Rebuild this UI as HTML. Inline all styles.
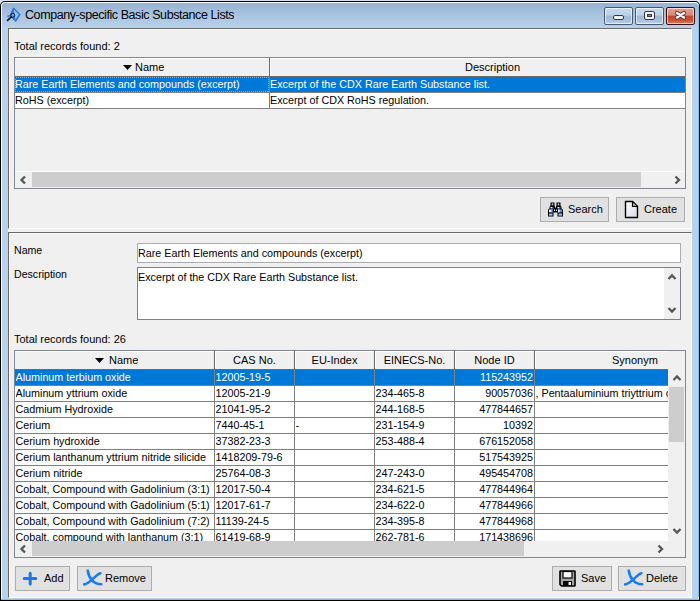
<!DOCTYPE html><html><head><meta charset="utf-8"><style>
*{margin:0;padding:0;box-sizing:border-box}
html,body{width:700px;height:601px;overflow:hidden;background:#fff}
body{position:relative;font-family:"Liberation Sans", sans-serif;font-size:11px;color:#000}
.a{position:absolute}
.t{position:absolute;white-space:nowrap;line-height:16px;overflow:hidden}
.btn{position:absolute;background:#e1e1e1;border:1px solid #adadad}
</style></head><body>
<div class="a" style="left:0;top:0;width:700px;height:601px;background:#d9e4f8"></div>
<div class="a" style="left:0;top:1px;width:700px;height:600px;background:#000;border-radius:5px 5px 0 0"></div>
<div class="a" style="left:1px;top:2px;width:698px;height:598px;background:#fff;border-radius:4px 4px 0 0"></div>
<div class="a" style="left:2px;top:3px;width:696px;height:596px;background:linear-gradient(#97b3d3 0px,#a9c3df 12px,#b9d1ea 25px,#b9d1ea 100%);border-radius:3px 3px 0 0"></div>
<div class="a" style="left:698px;top:5px;width:1px;height:592px;background:#5fd0f5"></div>
<div class="a" style="left:1px;top:599px;width:698px;height:1px;background:#5fd0f5"></div>
<svg class="a" style="left:4px;top:5px" width="20" height="20" viewBox="0 0 20 20"><polygon points="9.5,2.8 16.2,9.6 11.8,16.5 5.8,10.8" fill="#2f7fe0" stroke="#2462c0" stroke-width="0.7"/><polygon points="9.8,4.5 14.6,9.6 11.6,14.5 10.4,9.5" fill="#8ec6ff"/><ellipse cx="4.6" cy="11.2" rx="1.4" ry="1.1" fill="#3b86e4"/><circle cx="8.8" cy="10.3" r="2" fill="#5aa2f4" stroke="#151515" stroke-width="1"/><line x1="7.2" y1="12" x2="3.6" y2="15.4" stroke="#111" stroke-width="1.7" stroke-linecap="round"/></svg>
<div class="t" style="left:25px;top:7px;font-size:12.5px;letter-spacing:-0.42px;line-height:16px;color:#000">Company-specific Basic Substance Lists</div>
<div class="a" style="left:604px;top:7px;width:29px;height:18px;border:1px solid #4a5a6e;border-radius:2px;background:linear-gradient(#c6d9ee 0%,#bcd1ea 45%,#9eb8d5 50%,#a9c2dd 80%,#bcd3ec 100%);box-shadow:inset 0 0 0 1px rgba(255,255,255,0.6)"></div>
<div class="a" style="left:635px;top:7px;width:29px;height:18px;border:1px solid #4a5a6e;border-radius:2px;background:linear-gradient(#c6d9ee 0%,#bcd1ea 45%,#9eb8d5 50%,#a9c2dd 80%,#bcd3ec 100%);box-shadow:inset 0 0 0 1px rgba(255,255,255,0.6)"></div>
<div class="a" style="left:666px;top:7px;width:29px;height:18px;border:1px solid #3c0d0d;border-radius:2px;background:linear-gradient(#e8a08f 0%,#d98a76 45%,#c0442a 50%,#c9553b 80%,#d9866f 100%);box-shadow:inset 0 0 0 1px rgba(255,255,255,0.6)"></div>
<div class="a" style="left:613px;top:15px;width:11px;height:5px;background:#f4f4f4;border:1px solid #333a48;border-radius:2px"></div>
<div class="a" style="left:644px;top:11px;width:11px;height:9px;background:#f4f4f4;border:1px solid #333a48;border-radius:2px"></div>
<div class="a" style="left:647px;top:14px;width:5px;height:3px;background:#7a8aa0;border:1px solid #333a48"></div>
<svg class="a" style="left:666px;top:7px" width="30" height="18" viewBox="0 0 30 18"><path d="M11,6 L18,10.5 M18,6 L11,10.5" stroke="#4a3438" stroke-width="4.2" stroke-linecap="round"/><path d="M11,6 L18,10.5 M18,6 L11,10.5" stroke="#f4f4f4" stroke-width="2.6" stroke-linecap="round"/></svg>
<div class="a" style="left:8px;top:28px;width:684px;height:570px;background:#f0f0f0"></div>
<div class="a" style="left:8px;top:28px;width:684px;height:201px;border-top:1px solid #696969;border-left:1px solid #696969;border-bottom:1px solid #fff;border-right:1px solid #fff"></div>
<div class="a" style="left:9px;top:29px;width:682px;height:1px;background:#f9f9f9"></div>
<div class="a" style="left:9px;top:29px;width:1px;height:198px;background:#f9f9f9"></div>
<div class="a" style="left:8px;top:232px;width:684px;height:366px;border-top:1px solid #696969;border-left:1px solid #696969;border-bottom:1px solid #fff;border-right:1px solid #fff"></div>
<div class="a" style="left:9px;top:233px;width:682px;height:1px;background:#f9f9f9"></div>
<div class="a" style="left:9px;top:233px;width:1px;height:363px;background:#f9f9f9"></div>
<div class="t" style="left:14px;top:38px">Total records found: 2</div>
<div class="a" style="left:14px;top:57px;width:672px;height:132px;border:1px solid #828790;background:#f0f0f0"></div>
<div class="a" style="left:15px;top:58px;width:670px;height:19px;background:#f0f0f0;border-bottom:1px solid #696969"></div>
<div class="a" style="left:15px;top:58px;width:670px;height:1px;background:#fff"></div>
<div class="a" style="left:269px;top:58px;width:1px;height:18px;background:#696969"></div>
<div class="a" style="left:270px;top:59px;width:1px;height:17px;background:#fff"></div>
<svg class="a" style="left:123px;top:65px" width="9" height="6"><polygon points="0,0 9,0 4.5,5" fill="#000"/></svg>
<div class="t" style="left:135px;top:59px">Name</div>
<div class="t" style="left:465px;top:59px">Description</div>
<div class="a" style="left:15px;top:77px;width:670px;height:15px;background:#0078d7"></div>
<div class="a" style="left:15px;top:93px;width:670px;height:15px;background:#fff"></div>
<div class="a" style="left:15px;top:92px;width:670px;height:1px;background:#808080"></div>
<div class="a" style="left:15px;top:108px;width:670px;height:1px;background:#808080"></div>
<div class="a" style="left:269px;top:77px;width:1px;height:32px;background:#808080"></div>
<svg class="a" style="left:15px;top:77px" width="254" height="15" shape-rendering="crispEdges"><rect x="0.5" y="0.5" width="253" height="14" fill="none" stroke="#ff8c28" stroke-width="1" stroke-dasharray="1,1"/></svg>
<div class="t" style="left:15px;top:76px;color:#fff;font-size:10.75px">Rare Earth Elements and compounds (excerpt)</div>
<div class="t" style="left:270px;top:76px;color:#fff;font-size:10.75px">Excerpt of the CDX Rare Earth Substance list.</div>
<div class="t" style="left:15px;top:92px;font-size:10.75px">RoHS (excerpt)</div>
<div class="t" style="left:270px;top:92px;font-size:10.75px">Excerpt of CDX RoHS regulation.</div>
<div class="a" style="left:15px;top:171px;width:670px;height:1px;background:#fff"></div>
<div class="a" style="left:15px;top:172px;width:670px;height:16px;background:#f0f0f0"></div>
<div class="a" style="left:32px;top:172px;width:609px;height:15px;background:#cdcdcd"></div>
<svg class="a" style="left:19px;top:175px" width="9" height="10"><polyline points="6,1.5 2.5,5 6,8.5" fill="none" stroke="#555" stroke-width="2.3"/></svg>
<svg class="a" style="left:673px;top:175px" width="9" height="10"><polyline points="2.5,1.5 6,5 2.5,8.5" fill="none" stroke="#555" stroke-width="2.3"/></svg>
<div class="btn" style="left:540px;top:197px;width:69px;height:25px"></div>
<div class="btn" style="left:616px;top:197px;width:69px;height:25px"></div>
<svg class="a" style="left:547px;top:202px" width="17" height="15" viewBox="0 0 17 15"><path d="M3.5,0.5 H7.5 V3.5 L8,4.5 V5.5 H9 V4.5 L9.5,3.5 V0.5 H13.5 V3.5 L14.5,5 V6.5 L16,7.5 V14.5 H10.5 V10.5 H6.5 V14.5 H1 V7.5 L2.5,6.5 V5 L3.5,3.5 Z" fill="#000"/><rect x="4.5" y="1.5" width="2" height="2" fill="#3d6fb8"/><rect x="10.5" y="1.5" width="2" height="2" fill="#3d6fb8"/><rect x="5" y="1.7" width="1" height="1" fill="#fff"/><rect x="11" y="1.7" width="1" height="1" fill="#fff"/><rect x="3.5" y="5" width="3" height="1.6" fill="#4a7fc8"/><rect x="10.5" y="5" width="3" height="1.6" fill="#4a7fc8"/><rect x="3.6" y="5" width="1.2" height="1.2" fill="#fff"/><rect x="10.6" y="5" width="1.2" height="1.2" fill="#fff"/><rect x="2" y="7.5" width="4" height="2.8" fill="#e8f2ff"/><rect x="11" y="7.5" width="4" height="2.8" fill="#5a90d8"/><rect x="4.5" y="7.5" width="1.5" height="2.8" fill="#3a6cb0"/><rect x="11" y="7.5" width="1.6" height="2.8" fill="#f4f8ff"/><rect x="7" y="7.5" width="1" height="1.5" fill="#dfe9f8"/><rect x="9" y="7.5" width="1" height="1.5" fill="#dfe9f8"/><rect x="2" y="11.5" width="3.5" height="2.2" fill="#8cbcf0"/><rect x="11.5" y="11.5" width="3.5" height="2.2" fill="#8cbcf0"/></svg>
<div class="t" style="left:568px;top:201px">Search</div>
<svg class="a" style="left:624px;top:200px" width="15" height="19" viewBox="0 0 15 19"><defs><linearGradient id="dg" x1="0" y1="0" x2="1" y2="1"><stop offset="0" stop-color="#ffffff"/><stop offset="1" stop-color="#d4d8e2"/></linearGradient></defs><path d="M1.5,1.5 H8.5 L13.5,6.5 V17.5 H1.5 Z" fill="url(#dg)" stroke="#000" stroke-width="1.4" stroke-linejoin="round"/><path d="M8.5,1.5 V6.5 H13.5 Z" fill="#e8e8e8" stroke="#000" stroke-width="1.2" stroke-linejoin="round"/><path d="M9.2,2.5 V5.8 H12.5 Z" fill="#999"/></svg>
<div class="t" style="left:644px;top:201px">Create</div>
<div class="t" style="left:14px;top:242px;font-size:10.6px">Name</div>
<div class="t" style="left:14px;top:266px;font-size:10.6px">Description</div>
<div class="a" style="left:137px;top:243px;width:544px;height:20px;background:#fff;border:1px solid #abadb3"></div>
<div class="t" style="left:138px;top:245px;font-size:10.75px">Rare Earth Elements and compounds (excerpt)</div>
<div class="a" style="left:137px;top:267px;width:544px;height:53px;background:#fff;border:1px solid #7b808a"></div>
<div class="a" style="left:664px;top:268px;width:16px;height:51px;background:#f0f0f0"></div>
<svg class="a" style="left:667px;top:273px" width="10" height="8"><polyline points="1.5,6 5,2.5 8.5,6" fill="none" stroke="#555" stroke-width="2.3"/></svg>
<svg class="a" style="left:667px;top:306px" width="10" height="8"><polyline points="1.5,2 5,5.5 8.5,2" fill="none" stroke="#555" stroke-width="2.3"/></svg>
<div class="t" style="left:138px;top:269px;font-size:10.75px">Excerpt of the CDX Rare Earth Substance list.</div>
<div class="t" style="left:14px;top:331px">Total records found: 26</div>
<div class="a" style="left:14px;top:350px;width:672px;height:208px;border:1px solid #828790;background:#f0f0f0"></div>
<div class="a" style="left:15px;top:351px;width:653px;height:19px;background:#f0f0f0;border-bottom:1px solid #696969"></div>
<div class="a" style="left:15px;top:351px;width:653px;height:1px;background:#fff"></div>
<div class="a" style="left:214px;top:351px;width:1px;height:18px;background:#696969"></div>
<svg class="a" style="left:95px;top:358px" width="9" height="6"><polygon points="0,0 9,0 4.5,5" fill="#000"/></svg>
<div class="t" style="left:109px;top:352px">Name</div>
<div class="a" style="left:294px;top:351px;width:1px;height:18px;background:#696969"></div>
<div class="a" style="left:215px;top:352px;width:1px;height:17px;background:#fff"></div>
<div class="t" style="left:215px;top:352px;width:79px;text-align:center">CAS No.</div>
<div class="a" style="left:374px;top:351px;width:1px;height:18px;background:#696969"></div>
<div class="a" style="left:295px;top:352px;width:1px;height:17px;background:#fff"></div>
<div class="t" style="left:295px;top:352px;width:79px;text-align:center">EU-Index</div>
<div class="a" style="left:454px;top:351px;width:1px;height:18px;background:#696969"></div>
<div class="a" style="left:375px;top:352px;width:1px;height:17px;background:#fff"></div>
<div class="t" style="left:375px;top:352px;width:79px;text-align:center">EINECS-No.</div>
<div class="a" style="left:534px;top:351px;width:1px;height:18px;background:#696969"></div>
<div class="a" style="left:455px;top:352px;width:1px;height:17px;background:#fff"></div>
<div class="t" style="left:455px;top:352px;width:79px;text-align:center">Node ID</div>
<div class="a" style="left:535px;top:352px;width:1px;height:17px;background:#fff"></div>
<div class="t" style="left:612px;top:352px">Synonym</div>
<div class="a" style="left:15px;top:370px;width:653px;height:171px;background:#fff;overflow:hidden"></div>
<div class="a" style="left:15px;top:370px;width:653px;height:15px;background:#0078d7"></div>
<div class="a" style="left:15px;top:385px;width:653px;height:1px;background:#808080"></div>
<div class="t" style="left:15.5px;top:369px;width:198px;height:16px;color:#fff;font-size:10.75px">Aluminum terbium oxide</div>
<div class="t" style="left:215.5px;top:369px;width:78px;height:16px;color:#fff;font-size:10.75px">12005-19-5</div>
<div class="t" style="left:455px;top:369px;width:78px;height:16px;text-align:right;color:#fff;font-size:10.75px">115243952</div>
<div class="a" style="left:15px;top:401px;width:653px;height:1px;background:#808080"></div>
<div class="t" style="left:15.5px;top:385px;width:198px;height:16px;color:#000;font-size:10.75px">Aluminum yttrium oxide</div>
<div class="t" style="left:215.5px;top:385px;width:78px;height:16px;color:#000;font-size:10.75px">12005-21-9</div>
<div class="t" style="left:375.5px;top:385px;width:78px;height:16px;color:#000;font-size:10.75px">234-465-8</div>
<div class="t" style="left:455px;top:385px;width:78px;height:16px;text-align:right;color:#000;font-size:10.75px">90057036</div>
<div class="t" style="left:535.5px;top:385px;width:132px;height:16px;color:#000;font-size:10.75px">, Pentaaluminium triyttrium o</div>
<div class="a" style="left:15px;top:417px;width:653px;height:1px;background:#808080"></div>
<div class="t" style="left:15.5px;top:401px;width:198px;height:16px;color:#000;font-size:10.75px">Cadmium Hydroxide</div>
<div class="t" style="left:215.5px;top:401px;width:78px;height:16px;color:#000;font-size:10.75px">21041-95-2</div>
<div class="t" style="left:375.5px;top:401px;width:78px;height:16px;color:#000;font-size:10.75px">244-168-5</div>
<div class="t" style="left:455px;top:401px;width:78px;height:16px;text-align:right;color:#000;font-size:10.75px">477844657</div>
<div class="a" style="left:15px;top:433px;width:653px;height:1px;background:#808080"></div>
<div class="t" style="left:15.5px;top:417px;width:198px;height:16px;color:#000;font-size:10.75px">Cerium</div>
<div class="t" style="left:215.5px;top:417px;width:78px;height:16px;color:#000;font-size:10.75px">7440-45-1</div>
<div class="t" style="left:295.5px;top:417px;width:78px;height:16px;color:#000;font-size:10.75px">-</div>
<div class="t" style="left:375.5px;top:417px;width:78px;height:16px;color:#000;font-size:10.75px">231-154-9</div>
<div class="t" style="left:455px;top:417px;width:78px;height:16px;text-align:right;color:#000;font-size:10.75px">10392</div>
<div class="a" style="left:15px;top:449px;width:653px;height:1px;background:#808080"></div>
<div class="t" style="left:15.5px;top:433px;width:198px;height:16px;color:#000;font-size:10.75px">Cerium hydroxide</div>
<div class="t" style="left:215.5px;top:433px;width:78px;height:16px;color:#000;font-size:10.75px">37382-23-3</div>
<div class="t" style="left:375.5px;top:433px;width:78px;height:16px;color:#000;font-size:10.75px">253-488-4</div>
<div class="t" style="left:455px;top:433px;width:78px;height:16px;text-align:right;color:#000;font-size:10.75px">676152058</div>
<div class="a" style="left:15px;top:465px;width:653px;height:1px;background:#808080"></div>
<div class="t" style="left:15.5px;top:449px;width:198px;height:16px;color:#000;font-size:10.75px">Cerium lanthanum yttrium nitride silicide</div>
<div class="t" style="left:215.5px;top:449px;width:78px;height:16px;color:#000;font-size:10.75px">1418209-79-6</div>
<div class="t" style="left:455px;top:449px;width:78px;height:16px;text-align:right;color:#000;font-size:10.75px">517543925</div>
<div class="a" style="left:15px;top:481px;width:653px;height:1px;background:#808080"></div>
<div class="t" style="left:15.5px;top:465px;width:198px;height:16px;color:#000;font-size:10.75px">Cerium nitride</div>
<div class="t" style="left:215.5px;top:465px;width:78px;height:16px;color:#000;font-size:10.75px">25764-08-3</div>
<div class="t" style="left:375.5px;top:465px;width:78px;height:16px;color:#000;font-size:10.75px">247-243-0</div>
<div class="t" style="left:455px;top:465px;width:78px;height:16px;text-align:right;color:#000;font-size:10.75px">495454708</div>
<div class="a" style="left:15px;top:497px;width:653px;height:1px;background:#808080"></div>
<div class="t" style="left:15.5px;top:481px;width:198px;height:16px;color:#000;font-size:10.75px">Cobalt, Compound with Gadolinium (3:1)</div>
<div class="t" style="left:215.5px;top:481px;width:78px;height:16px;color:#000;font-size:10.75px">12017-50-4</div>
<div class="t" style="left:375.5px;top:481px;width:78px;height:16px;color:#000;font-size:10.75px">234-621-5</div>
<div class="t" style="left:455px;top:481px;width:78px;height:16px;text-align:right;color:#000;font-size:10.75px">477844964</div>
<div class="a" style="left:15px;top:513px;width:653px;height:1px;background:#808080"></div>
<div class="t" style="left:15.5px;top:497px;width:198px;height:16px;color:#000;font-size:10.75px">Cobalt, Compound with Gadolinium (5:1)</div>
<div class="t" style="left:215.5px;top:497px;width:78px;height:16px;color:#000;font-size:10.75px">12017-61-7</div>
<div class="t" style="left:375.5px;top:497px;width:78px;height:16px;color:#000;font-size:10.75px">234-622-0</div>
<div class="t" style="left:455px;top:497px;width:78px;height:16px;text-align:right;color:#000;font-size:10.75px">477844966</div>
<div class="a" style="left:15px;top:529px;width:653px;height:1px;background:#808080"></div>
<div class="t" style="left:15.5px;top:513px;width:198px;height:16px;color:#000;font-size:10.75px">Cobalt, Compound with Gadolinium (7:2)</div>
<div class="t" style="left:215.5px;top:513px;width:78px;height:16px;color:#000;font-size:10.75px">11139-24-5</div>
<div class="t" style="left:375.5px;top:513px;width:78px;height:16px;color:#000;font-size:10.75px">234-395-8</div>
<div class="t" style="left:455px;top:513px;width:78px;height:16px;text-align:right;color:#000;font-size:10.75px">477844968</div>
<div class="t" style="left:15.5px;top:529px;width:198px;height:12px;color:#000;font-size:10.75px">Cobalt, compound with lanthanum (3:1)</div>
<div class="t" style="left:215.5px;top:529px;width:78px;height:12px;color:#000;font-size:10.75px">61419-68-9</div>
<div class="t" style="left:375.5px;top:529px;width:78px;height:12px;color:#000;font-size:10.75px">262-781-6</div>
<div class="t" style="left:455px;top:529px;width:78px;height:12px;text-align:right;color:#000;font-size:10.75px">171438696</div>
<div class="a" style="left:214px;top:370px;width:1px;height:171px;background:#808080"></div>
<div class="a" style="left:294px;top:370px;width:1px;height:171px;background:#808080"></div>
<div class="a" style="left:374px;top:370px;width:1px;height:171px;background:#808080"></div>
<div class="a" style="left:454px;top:370px;width:1px;height:171px;background:#808080"></div>
<div class="a" style="left:534px;top:370px;width:1px;height:171px;background:#808080"></div>
<div class="a" style="left:668px;top:369px;width:17px;height:172px;background:#f0f0f0"></div>
<div class="a" style="left:669px;top:387px;width:15px;height:55px;background:#cdcdcd"></div>
<svg class="a" style="left:672px;top:374px" width="10" height="8"><polyline points="1.5,6 5,2.5 8.5,6" fill="none" stroke="#555" stroke-width="2.3"/></svg>
<svg class="a" style="left:672px;top:527px" width="10" height="8"><polyline points="1.5,2 5,5.5 8.5,2" fill="none" stroke="#555" stroke-width="2.3"/></svg>
<div class="a" style="left:15px;top:541px;width:670px;height:16px;background:#f0f0f0"></div>
<div class="a" style="left:32px;top:541px;width:492px;height:15px;background:#cdcdcd"></div>
<svg class="a" style="left:19px;top:544px" width="9" height="10"><polyline points="6,1.5 2.5,5 6,8.5" fill="none" stroke="#555" stroke-width="2.3"/></svg>
<svg class="a" style="left:656px;top:544px" width="9" height="10"><polyline points="2.5,1.5 6,5 2.5,8.5" fill="none" stroke="#555" stroke-width="2.3"/></svg>
<div class="btn" style="left:15px;top:566px;width:55px;height:25px"></div>
<div class="btn" style="left:77px;top:566px;width:75px;height:25px"></div>
<div class="btn" style="left:552px;top:566px;width:60px;height:25px"></div>
<div class="btn" style="left:618px;top:566px;width:68px;height:25px"></div>
<svg class="a" style="left:22px;top:571px" width="16" height="16" viewBox="0 0 16 16"><path d="M8.2,2.2 V13 M2.2,7.4 H13.8" stroke="#1f78e6" stroke-width="3" stroke-linecap="round"/></svg>
<div class="t" style="left:44px;top:570px">Add</div>
<svg class="a" style="left:83px;top:569px" width="20" height="18" viewBox="0 0 20 18"><path d="M4.8,1.6 C5.5,8 10,15.3 18.2,15.2" fill="none" stroke="#1a7cf0" stroke-width="2.6" stroke-linecap="round"/><path d="M17.4,4.2 C13,5 7,15 1.2,15.4" fill="none" stroke="#1a7cf0" stroke-width="2.6" stroke-linecap="round"/></svg>
<div class="t" style="left:105px;top:570px">Remove</div>
<svg class="a" style="left:559px;top:570px" width="17" height="17" viewBox="0 0 17 17"><path d="M1,1.5 Q1,1 1.5,1 H15.5 Q16,1 16,1.5 V15.5 Q16,16 15.5,16 H2.5 L1,14.5 Z" fill="#a8a8a8" stroke="#000" stroke-width="1.6"/><rect x="4" y="1.5" width="9" height="6.5" fill="#fafafa" stroke="#000" stroke-width="1.2"/><rect x="4" y="11" width="9" height="5" fill="#000"/><rect x="9.5" y="12" width="2.5" height="3" fill="#eee"/></svg>
<div class="t" style="left:581px;top:570px">Save</div>
<svg class="a" style="left:624px;top:569px" width="20" height="18" viewBox="0 0 20 18"><path d="M4.8,1.6 C5.5,8 10,15.3 18.2,15.2" fill="none" stroke="#1a7cf0" stroke-width="2.6" stroke-linecap="round"/><path d="M17.4,4.2 C13,5 7,15 1.2,15.4" fill="none" stroke="#1a7cf0" stroke-width="2.6" stroke-linecap="round"/></svg>
<div class="t" style="left:646px;top:570px">Delete</div>
</body></html>
